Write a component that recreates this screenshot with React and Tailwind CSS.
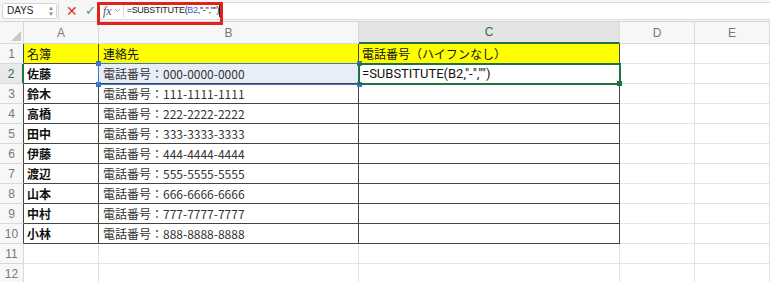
import React from 'react';

const data = [
  ['名簿', '連絡先', '電話番号（ハイフンなし）'],
  ['佐藤', '電話番号：000-0000-0000', '=SUBSTITUTE(B2,"-","")'],
  ['鈴木', '電話番号：111-1111-1111', ''],
  ['高橋', '電話番号：222-2222-2222', ''],
  ['田中', '電話番号：333-3333-3333', ''],
  ['伊藤', '電話番号：444-4444-4444', ''],
  ['渡辺', '電話番号：555-5555-5555', ''],
  ['山本', '電話番号：666-6666-6666', ''],
  ['中村', '電話番号：777-7777-7777', ''],
  ['小林', '電話番号：888-8888-8888', ''],
  ['', '', ''],
  ['', '', ''],
];

const cols = ['A', 'B', 'C', 'D', 'E'];

const font = { fontFamily: '"Noto Sans CJK JP", "Noto Sans", sans-serif' };

const Handle = ({ className }) => (
  <div className={'absolute w-[5px] h-[5px] ' + className} />
);

const App = () => {
  return (
    <div className="relative w-[770px] h-[282px] overflow-hidden bg-white" style={font}>
      {/* formula bar */}
      <div className="flex items-center h-[22px] bg-[#f6f6f6] border-b border-[#d4d4d4] font-['Liberation_Sans',sans-serif]">
        <div className="ml-[2px] w-[55px] h-[16px] bg-white border border-[#d6d6d6] rounded-[2px] flex items-center justify-between pl-[4px] pr-[2px]">
          <span className="text-[10px] text-[#222]">DAYS</span>
          <span className="flex flex-col text-[6px] leading-[6px] text-[#888]">
            <span>▲</span>
            <span>▼</span>
          </span>
        </div>
        <div className="ml-[1px] w-px h-[18px] bg-[#d9d9d9]" />
        <span className="ml-[7px] text-[14px] leading-none text-[#e0302a]">✕</span>
        <span className="ml-[7px] text-[13px] leading-none text-[#3aa655]">✓</span>
        <div className="ml-[1px] flex-1 h-[18px] bg-white border-y border-[#dcdcdc] flex items-center">
          <span className="ml-[6px] text-[12px] italic text-[#555] font-['Liberation_Serif',serif]">fx</span>
          <svg width="7" height="5" viewBox="0 0 7 5" className="ml-[2px]">
            <path d="M1 1 L3.5 3.5 L6 1" fill="none" stroke="#aaa" strokeWidth="1" />
          </svg>
          <div className="ml-[2px] w-px h-[14px] bg-[#dcdcdc]" />
          <span className="ml-[3px] text-[9px] tracking-[-0.3px] text-[#222]">
            =SUBSTITUTE(<span className="text-[#3467c9]">B2</span>,"-","")
          </span>
          <span className="w-px h-[12px] bg-[#222]" />
        </div>
      </div>

      {/* sheet */}
      <div className="grid grid-cols-[24px_75px_260px_261px_75px_75px] grid-rows-[22px_repeat(12,20px)]">
        <div className="bg-[#f7f7f7] border-r border-b border-[#d9d9d9] relative">
          <svg width="10" height="10" viewBox="0 0 10 10" className="absolute right-[2px] bottom-[2px]">
            <path d="M10 0 L10 10 L0 10 Z" fill="#c9c9c9" />
          </svg>
        </div>
        {cols.map((c) =>
          c === 'C' ? (
            <div key={c} className="bg-[#e4e4e4] border-r border-b-2 border-r-[#d9d9d9] border-b-[#1f7244] flex items-center justify-center text-[12px] text-[#1f7244] font-['Liberation_Sans',sans-serif]">
              {c}
            </div>
          ) : (
            <div key={c} className="bg-[#f7f7f7] border-r border-b border-[#d9d9d9] flex items-center justify-center text-[12px] text-[#777] font-['Liberation_Sans',sans-serif]">
              {c}
            </div>
          )
        )}

        {data.map((row, r) => {
          const n = r + 1;
          const inTable = n <= 10;
          return (
            <React.Fragment key={n}>
              <div
                className={
                  n === 2
                    ? 'bg-[#e9e9e9] border-b border-r-2 border-b-[#d9d9d9] border-r-[#1f7244] flex items-center justify-center text-[12px] text-[#1f7244] font-["Liberation_Sans",sans-serif]'
                    : inTable
                    ? 'bg-[#f7f7f7] border-b border-r border-b-[#d9d9d9] border-r-[#444] flex items-center justify-center text-[12px] text-[#777] font-["Liberation_Sans",sans-serif]'
                    : 'bg-[#f7f7f7] border-b border-r border-[#d9d9d9] flex items-center justify-center text-[12px] text-[#777] font-["Liberation_Sans",sans-serif]'
                }
              >
                {n}
              </div>
              <div
                className={
                  (inTable ? 'border-[#444] ' : 'border-[#e2e2e2] ') +
                  (n === 1 ? 'bg-[#ffff00] ' : '') +
                  'border-r border-b flex items-center pl-[3px] text-[12px] text-[#111] ' +
                  (n === 1 ? '' : 'font-semibold')
                }
              >
                {row[0]}
              </div>
              <div
                className={
                  (inTable ? 'border-[#444] ' : 'border-[#e2e2e2] ') +
                  (n === 1 ? 'bg-[#ffff00] ' : n === 2 ? 'bg-[#e8eef8] ' : '') +
                  'border-r border-b flex items-center pl-[4px] text-[12px] ' +
                  (n === 1 ? 'text-[#111]' : 'text-[#333]')
                }
              >
                {row[1]}
              </div>
              <div
                className={
                  (inTable ? 'border-[#444] ' : 'border-[#e2e2e2] ') +
                  (n === 1 ? 'bg-[#ffff00] ' : '') +
                  'border-r border-b flex items-center pl-[3px] text-[#111] ' +
                  (n === 2 ? "text-[13px] font-['Roboto',sans-serif]" : 'text-[12px]')
                }
              >
                {row[2]}
              </div>
              <div className="border-r border-b border-[#e2e2e2]" />
              <div className="border-r border-b border-[#e2e2e2]" />
            </React.Fragment>
          );
        })}
      </div>

      {/* B2 reference highlight */}
      <div className="absolute left-[98px] top-[63px] w-[262px] h-[22px] border border-[#3b73d6] pointer-events-none">
        <Handle className="-left-[3px] -top-[3px] bg-[#3b73d6]" />
        <Handle className="-right-[3px] -top-[3px] bg-[#3b73d6]" />
        <Handle className="-left-[3px] -bottom-[3px] bg-[#3b73d6]" />
        <Handle className="-right-[3px] -bottom-[3px] bg-[#3b73d6]" />
      </div>

      {/* C2 active cell */}
      <div className="absolute left-[358px] top-[63px] w-[263px] h-[22px] border-2 border-[#1f7244] pointer-events-none">
        <Handle className="-right-[3px] -bottom-[3px] bg-[#1f7244]" />
      </div>

      {/* annotation */}
      <div className="absolute left-[97px] top-[2px] w-[126px] h-[23px] border-[3px] border-[#e2231a] pointer-events-none" />
    </div>
  );
};

export default App;
